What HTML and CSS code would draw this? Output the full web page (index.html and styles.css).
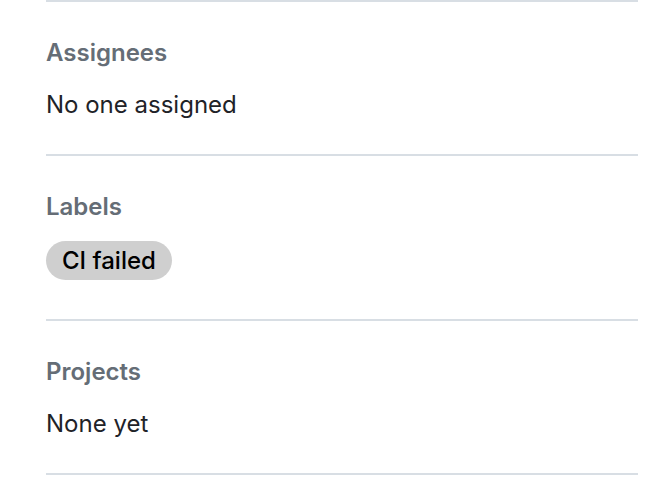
FILE: index.html
```html
<!DOCTYPE html>
<html lang="en">
<head>
<meta charset="utf-8">
<title>Sidebar</title>
<link rel="stylesheet" href="styles.css">
</head>
<body>
<div class="sidebar">
  <section class="item">
    <h3 class="item-title">Assignees</h3>
    <p class="item-body">No one assigned</p>
  </section>
  <section class="item">
    <h3 class="item-title">Labels</h3>
    <div class="labels">
      <span class="label">CI failed</span>
    </div>
  </section>
  <section class="item item-last">
    <h3 class="item-title">Projects</h3>
    <p class="item-body">None yet</p>
  </section>
</div>
</body>
</html>
```

FILE: styles.css
```css
html, body {
  margin: 0;
  padding: 0;
  background: #ffffff;
}

body {
  font-family: Inter, "Liberation Sans", sans-serif;
  color: #1f2328;
}

.sidebar {
  width: 592px;
  padding-left: 46px;
}

.item {
  border-top: 2px solid #d8dee4;
  padding: 33px 0 31px;
  display: flex;
  flex-direction: column;
  gap: 16px;
}

.item-last {
  border-bottom: 2px solid #d8dee4;
}

.item-title {
  margin: 0;
  font-size: 24px;
  line-height: 36px;
  font-weight: 600;
  color: #656d76;
}

.item-body {
  margin: 0;
  font-size: 24px;
  line-height: 36px;
  font-weight: 400;
  color: #1f2328;
}

.labels {
  display: flex;
  flex-wrap: wrap;
  padding-bottom: 8px;
}

.label {
  display: inline-flex;
  align-items: center;
  height: 39px;
  padding: 0 16px;
  border-radius: 20px;
  background: #cfcfcf;
  color: #000000;
  font-size: 24px;
  font-weight: 500;
}
```
